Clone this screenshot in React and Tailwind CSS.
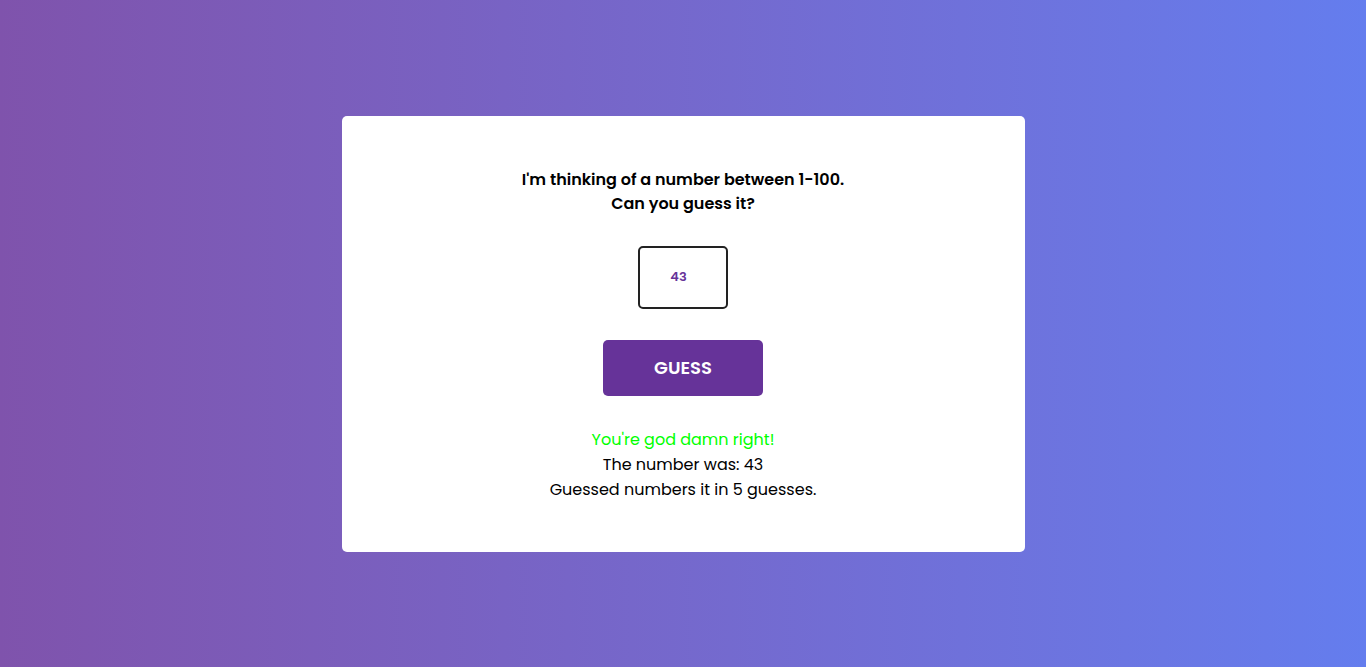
export default function App() {
  return (
    <div className="min-h-screen w-full flex items-center justify-center bg-gradient-to-r from-[#7f53ac] to-[#647dee] font-['Poppins','Noto_Sans','Liberation_Sans',sans-serif]">
      <div className="w-1/2 bg-white rounded-[5px] pt-[52px] pb-[50px] flex flex-col items-center text-center">
        <h1 className="text-base font-semibold leading-6 text-black">
          I'm thinking of a number between 1-100.
          <br />
          Can you guess it?
        </h1>
        <input
          type="text"
          defaultValue="43"
          className="mt-[30px] w-[90px] h-[63px] border-2 border-[#222] rounded-[5px] pr-[9px] text-center text-[13px] font-semibold text-[#663399] outline-none"
        />
        <button className="mt-[31px] w-40 h-[56px] bg-[#663399] rounded-[5px] text-white text-lg font-semibold">
          GUESS
        </button>
        <div className="mt-[31px] text-base leading-[25px] text-black">
          <p className="text-[#00ff00]">You're god damn right!</p>
          <p>The number was: 43</p>
          <p>Guessed numbers it in 5 guesses.</p>
        </div>
      </div>
    </div>
  );
}
